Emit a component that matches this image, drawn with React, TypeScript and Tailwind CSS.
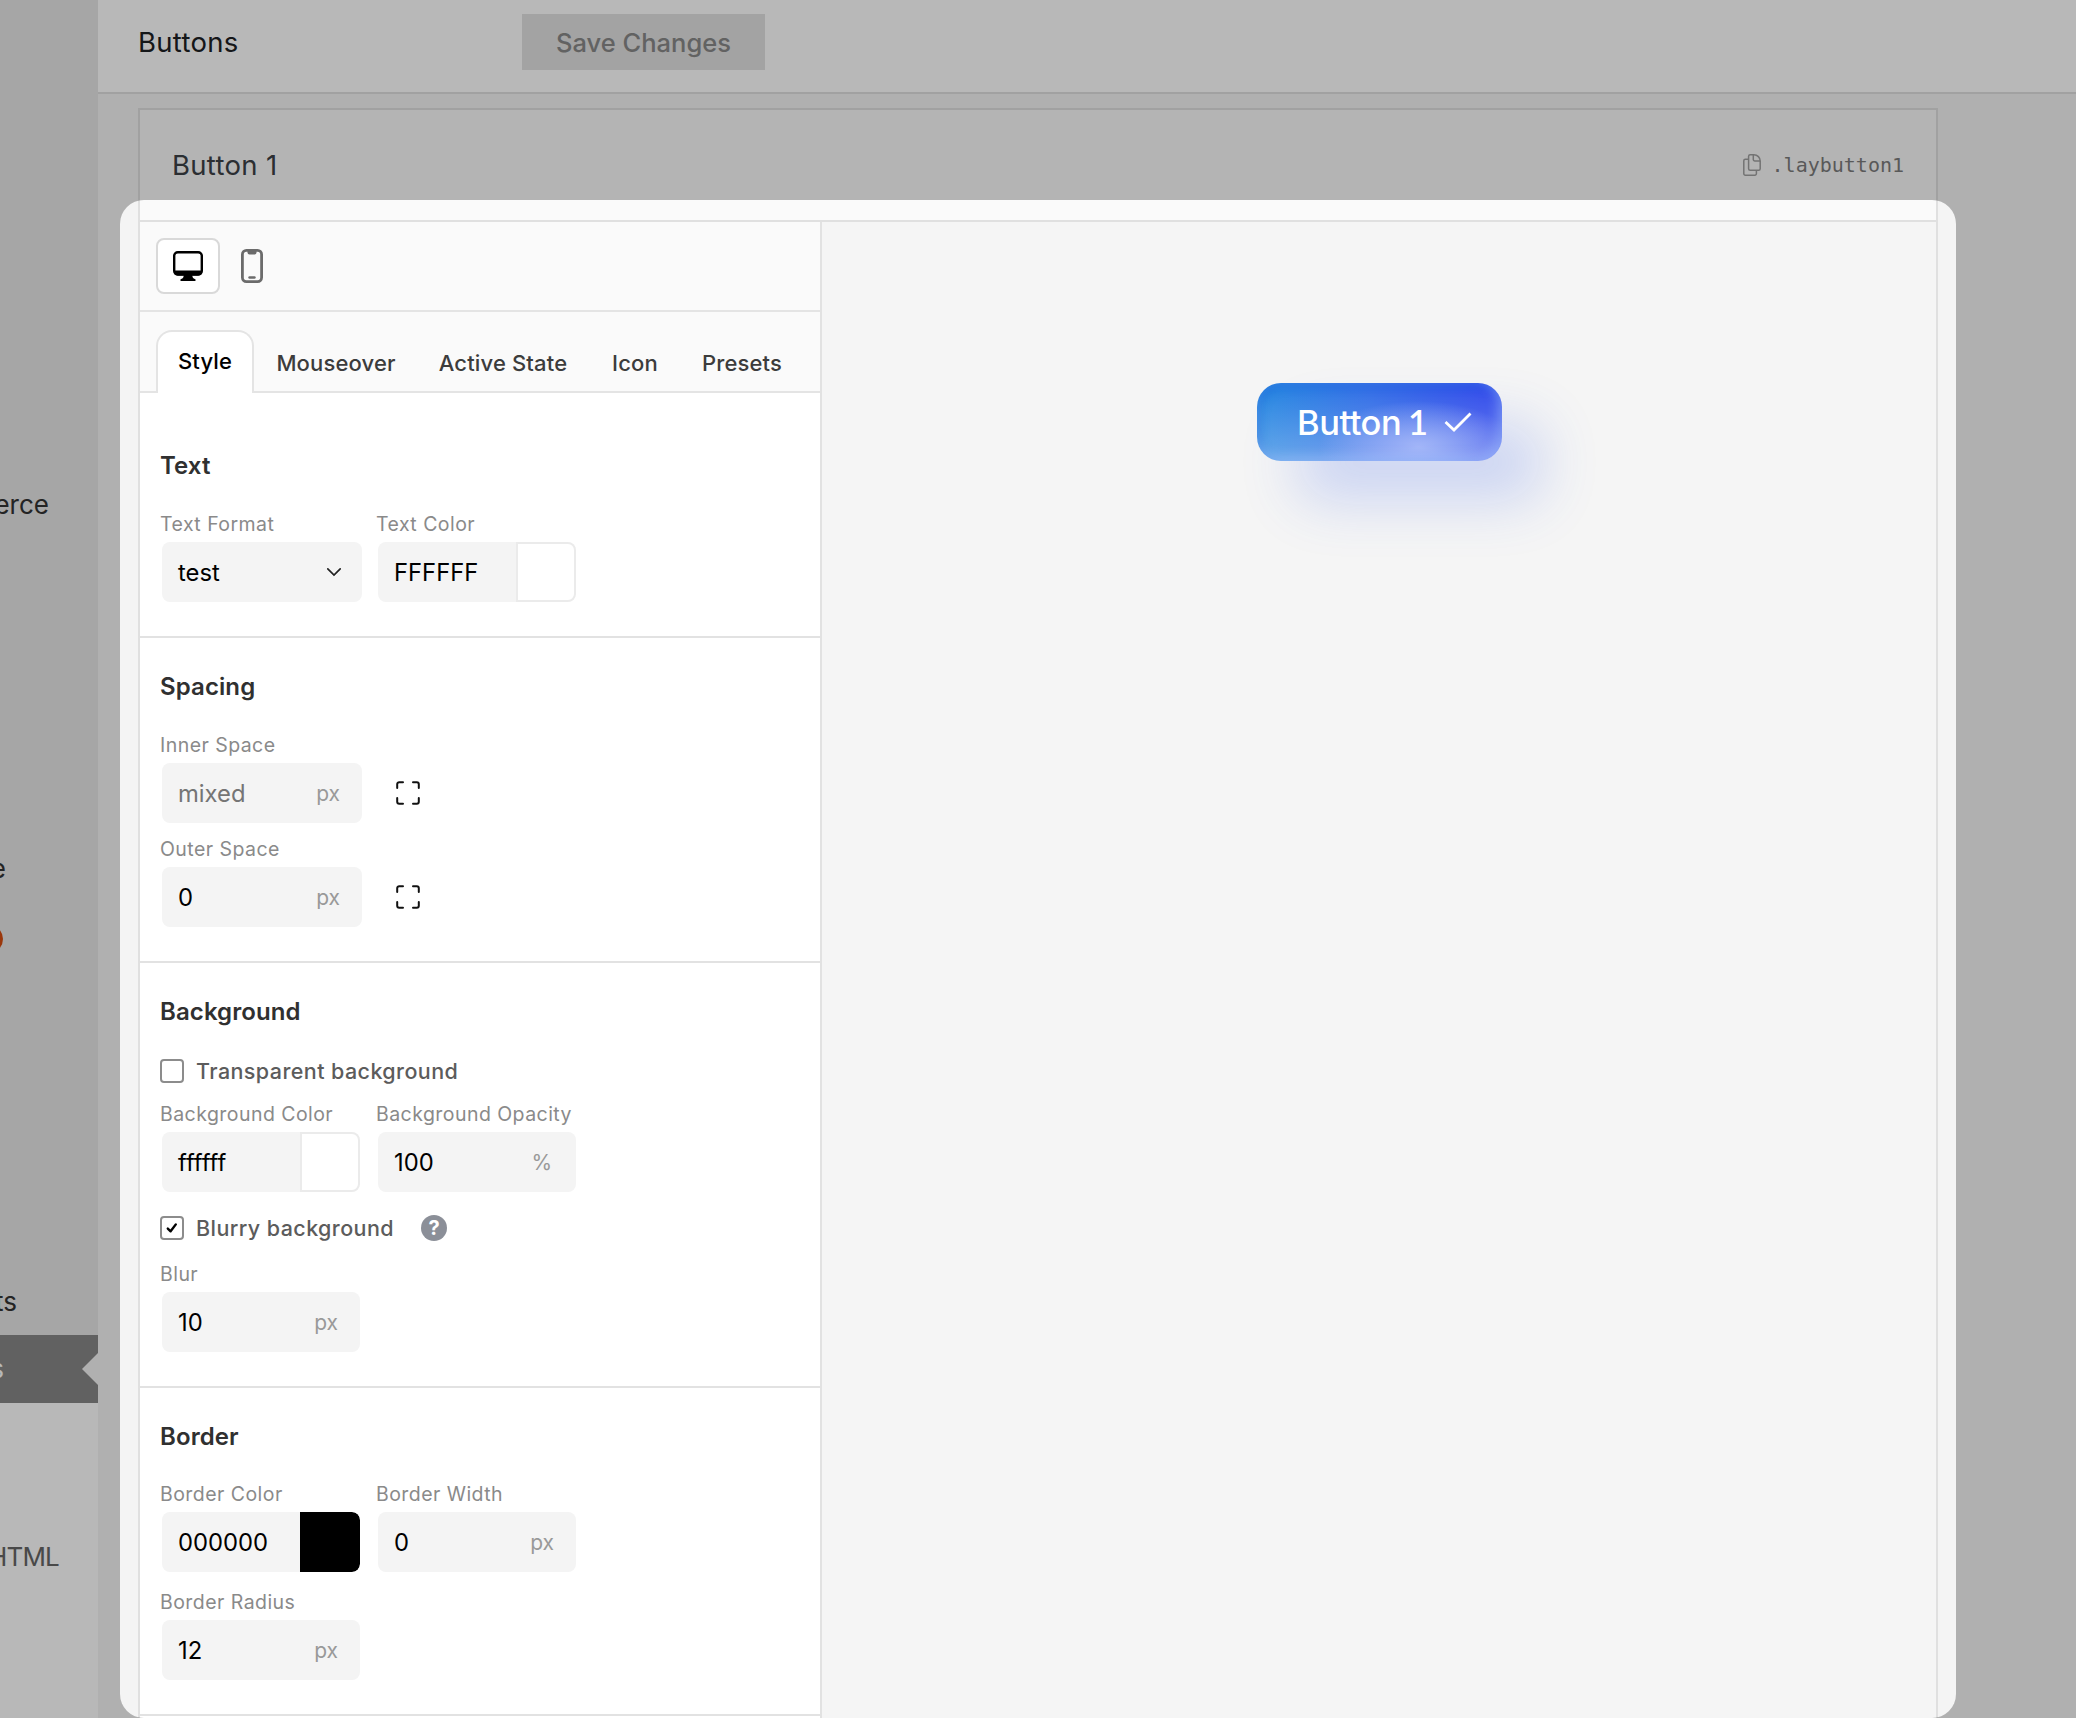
import React from "react";
import { clsx } from "clsx";

const ui = "font-['Inter','Liberation_Sans',sans-serif]";

const TABS = [
  { name: "Mouseover", size: "w-[118px]", gap: "ml-[23px]" },
  { name: "Active State", size: "w-[130px]", gap: "ml-[43px]" },
  { name: "Icon", size: "w-[46px]", gap: "ml-[44px]" },
  { name: "Presets", size: "w-[82px]", gap: "ml-[43px]" },
];

function DesktopIcon() {
  return (
    <svg width="30" height="30" viewBox="0 0 30 30" fill="none">
      <rect x="1.2" y="1.2" width="27.6" height="22.3" rx="3.6" stroke="#000" strokeWidth="2.4" />
      <path d="M1 19.5h28v1.5a3.6 3.6 0 0 1-3.6 3.6H4.6A3.6 3.6 0 0 1 1 21z" fill="#000" />
      <path d="M11 24h8l1 3 2.2 1.2a.95.95 0 0 1-.4 1.8H8.2a.95.95 0 0 1-.4-1.8l2.2-1.2z" fill="#000" />
    </svg>
  );
}

function PhoneIcon() {
  return (
    <svg width="22" height="34" viewBox="0 0 22 34" fill="none">
      <rect x="1.4" y="1.4" width="19.2" height="31.2" rx="4" stroke="#6b6b6b" strokeWidth="2.8" />
      <path d="M6.5 1.5h9v2a2 2 0 0 1-2 2h-5a2 2 0 0 1-2-2z" fill="#6b6b6b" />
      <path d="M8.5 28.5h5" stroke="#6b6b6b" strokeWidth="2.4" strokeLinecap="round" />
    </svg>
  );
}

function CopyIcon() {
  return (
    <svg width="18" height="22" viewBox="0 0 18 22" fill="none" stroke="#a0a0a0" strokeWidth="1.5" strokeLinejoin="round">
      <path d="M5.6 2.2A1.5 1.5 0 0 1 7.1.8h3.8c3.6 0 6.3 2.7 6.3 6.3v7.6a1.5 1.5 0 0 1-1.5 1.5H7.1a1.5 1.5 0 0 1-1.5-1.5z" />
      <path d="M10.3.9v4.6a1.5 1.5 0 0 0 1.5 1.5h5.3" />
      <path d="M5.6 5.3H2.3A1.5 1.5 0 0 0 .8 6.8v12.9a1.5 1.5 0 0 0 1.5 1.5h9.6a1.5 1.5 0 0 0 1.5-1.5v-3.5" />
    </svg>
  );
}

function ExpandIcon() {
  return (
    <svg width="24" height="24" viewBox="0 0 24 24" fill="none" stroke="#111" strokeWidth="2" strokeLinecap="round">
      <path d="M1.2 7V3.2a2 2 0 0 1 2-2H7" />
      <path d="M17 1.2h3.8a2 2 0 0 1 2 2V7" />
      <path d="M22.8 17v3.8a2 2 0 0 1-2 2H17" />
      <path d="M7 22.8H3.2a2 2 0 0 1-2-2V17" />
    </svg>
  );
}

function Field({
  label,
  value,
  unit,
  swatch,
  select,
  muted,
  wide,
}: {
  label: string;
  value: string;
  unit?: string;
  swatch?: "white" | "black";
  select?: boolean;
  muted?: boolean;
  wide?: boolean;
}) {
  return (
    <div className={clsx("shrink-0", wide ? "w-[202px]" : "w-[200px]")}>
      <div className="h-[26px] whitespace-nowrap text-[19.5px] leading-[26px] tracking-[0.45px] text-[#8a8a8a]">{label}</div>
      <div className="ml-0.5 mt-[5px] flex h-[60px] items-center overflow-hidden rounded-lg bg-[#f4f4f4] pl-4">
        <span className={clsx("flex-1 pt-0.5 text-[23.8px]", muted ? "text-[#757575]" : "text-black")}>{value}</span>
        {unit && (
          <span className={clsx("pt-0.5 text-[21px] text-[#999]", unit === "%" ? "mr-6" : "mr-[22px]")}>{unit}</span>
        )}
        {select && (
          <svg className="mr-5" width="16" height="10" viewBox="0 0 16 10" fill="none" stroke="#222" strokeWidth="1.7">
            <path d="M1.8 1.8 8 8l6.2-6.2" strokeLinecap="round" />
          </svg>
        )}
        {swatch && (
          <span
            className={clsx(
              "h-[60px] w-[60px] rounded-r-lg",
              swatch === "white" ? "border-2 border-[#ebebeb] bg-white" : "bg-black"
            )}
          />
        )}
      </div>
    </div>
  );
}

function Checkbox({ label, checked }: { label: string; checked?: boolean }) {
  return (
    <div className="flex h-6 items-center">
      <span className="flex size-6 items-center justify-center rounded-[4px] border-2 border-[#8c8c8c] bg-white">
        {checked && (
          <svg width="12" height="12" viewBox="0 0 12 12" fill="none" stroke="#000" strokeWidth="2.4">
            <path d="M1.8 6.6 4.6 9.3 9.8 2.4" strokeLinecap="round" strokeLinejoin="round" />
          </svg>
        )}
      </span>
      <span className="ml-3 whitespace-nowrap text-[21.5px] font-medium tracking-[0.42px] text-[#5c5c5c]">{label}</span>
    </div>
  );
}

function Section({ title, first, children }: { title: string; first?: boolean; children: React.ReactNode }) {
  return (
    <section className={clsx("border-b-2 border-[#e2e2e2] pb-[34px] pl-5", first ? "pt-[57px]" : "pt-[33px]")}>
      <h2 className="text-[24px] font-semibold leading-8 tracking-[0.1px] text-[#303030]">{title}</h2>
      {children}
    </section>
  );
}

function Sidebar() {
  return (
    <aside className="flex w-[98px] shrink-0 flex-col overflow-hidden bg-white text-[26px] leading-8 text-[#323232]">
      <div className="flex h-[1335px] flex-col bg-[#e6e6e6]">
        <div className="mt-[489px] flex w-[49px] justify-end whitespace-nowrap">Commerce</div>
        <div className="mt-[332px] flex w-[6px] justify-end">Profile</div>
        <div className="-ml-[25px] mt-10 size-7 rounded-full bg-[#d64d10]" />
        <div className="mt-[333px] flex w-[17px] justify-end">Formats</div>
      </div>
      <div className="flex h-[68px] items-center justify-between bg-[#878787] text-white">
        <span className="flex w-1 justify-end">Buttons</span>
        <svg width="16" height="32" viewBox="0 0 16 32">
          <path d="M16 0v32L0 16z" fill="#f4f4f4" />
        </svg>
      </div>
      <div className="mt-[138px] flex w-[59px] justify-end whitespace-nowrap tracking-[-0.8px] text-[#666]">Custom HTML</div>
    </aside>
  );
}

function Preview() {
  return (
    <div className="flex flex-1 justify-center bg-[#f5f5f5] pt-[161px]">
      <button className="ml-px flex h-[78px] w-[245px] items-center rounded-[24px] bg-[radial-gradient(ellipse_100px_46px_at_66%_82%,#a3b6f8_0%,#a3b6f800_100%),linear-gradient(180deg,#ffffff00_0%,#ffffff50_100%),linear-gradient(95deg,#2186e0_0%,#2f6ce6_45%,#2f4bea_90%)] pl-10 text-white shadow-[40px_40px_56px_rgba(50,95,235,0.21),inset_-4px_-4px_12px_rgba(175,205,255,0.45),inset_4px_4px_10px_rgba(20,90,215,0.35)]">
        <span className="w-[131px] whitespace-nowrap text-left text-[34.5px] font-medium tracking-[-0.5px]">
          Button <span className="-ml-0.5 font-['Lato',sans-serif] font-semibold">1</span>
        </span>
        <svg className="ml-4" width="28" height="20" viewBox="0 0 28 20" fill="none" stroke="#fff" strokeWidth="2.8">
          <path d="M1.5 10 10 18 26.5 1.5" />
        </svg>
      </button>
    </div>
  );
}

export default function App() {
  return (
    <div className={clsx(ui, "relative flex h-[1718px] w-[2076px] overflow-hidden bg-[#f4f4f4]")}>
      <Sidebar />
      <main className="flex min-w-0 flex-1 flex-col">
        <header className="flex h-[94px] shrink-0 items-start border-b-2 border-[#e0e0e0] bg-white pl-10">
          <h1 className="mt-[26px] w-[384px] text-[27.5px] leading-8 tracking-[0.3px] text-[#1d2023]">Buttons</h1>
          <button className="mt-3.5 h-14 w-[243px] bg-[#e2e2e2] pt-0.5 text-[25.5px] font-medium text-[#888]">Save Changes</button>
        </header>

        <div className="ml-10 mt-3.5 flex w-[1800px] flex-1 flex-col border-x-2 border-t-2 border-[#e0e0e0]">
          <div className="flex h-28 shrink-0 items-center justify-between border-b-2 border-[#e0e0e0] bg-[#fafafa] pl-8 pr-8">
            <span className="pt-0.5 text-[27.5px] tracking-[0.3px] text-[#3c4146]">Button 1</span>
            <span className="flex items-center gap-[11px]">
              <CopyIcon />
              <code className="font-['DejaVu_Sans_Mono',monospace] text-[20px] text-[#7c7c7c]">.laybutton1</code>
            </span>
          </div>

          <div className="flex flex-1">
            <div className="w-[682px] shrink-0 border-r-2 border-[#e2e2e2] bg-white">
              <div className="flex h-[90px] items-center border-b-2 border-[#e4e4e4] bg-[#fafafa] pl-4">
                <div className="flex h-14 w-16 items-center justify-center rounded-lg border-2 border-[#d9d9d9] bg-white">
                  <DesktopIcon />
                </div>
                <div className="ml-[21px]">
                  <PhoneIcon />
                </div>
              </div>

              <nav className="flex h-[81px] items-end border-b-2 border-[#e4e4e4] bg-[#fafafa] pl-4 text-[22px] font-medium tracking-[0.15px] text-[#3c3c3c]">
                <div className="-mb-0.5 flex h-[63px] w-[98px] items-center justify-center rounded-t-[16px] border-x-2 border-t-2 border-[#e4e4e4] bg-white pb-0.5 text-black">
                  Style
                </div>
                {TABS.map((tab) => (
                  <div key={tab.name} className={clsx("flex h-[55px] items-center justify-center whitespace-nowrap", tab.size, tab.gap)}>
                    {tab.name}
                  </div>
                ))}
              </nav>

              <Section title="Text" first>
                <div className="mt-[29px] flex gap-[14px]">
                  <Field label="Text Format" value="test" select wide />
                  <Field label="Text Color" value="FFFFFF" swatch="white" />
                </div>
              </Section>

              <Section title="Spacing">
                <div className="mt-[29px] flex items-end">
                  <Field label="Inner Space" value="mixed" unit="px" muted wide />
                  <div className="mb-[18px] ml-[34px]">
                    <ExpandIcon />
                  </div>
                </div>
                <div className="mt-[13px] flex items-end">
                  <Field label="Outer Space" value="0" unit="px" wide />
                  <div className="mb-[18px] ml-[34px]">
                    <ExpandIcon />
                  </div>
                </div>
              </Section>

              <Section title="Background">
                <div className="mt-[31px]">
                  <Checkbox label="Transparent background" />
                </div>
                <div className="mt-[18px] flex gap-4">
                  <Field label="Background Color" value="ffffff" swatch="white" />
                  <Field label="Background Opacity" value="100" unit="%" />
                </div>
                <div className="mt-[23px] flex items-center">
                  <Checkbox label="Blurry background" checked />
                  <span className="ml-[27px] flex size-[26px] items-center justify-center rounded-full bg-[#8b8f98] text-[20px] font-bold text-white">?</span>
                </div>
                <div className="mt-5">
                  <Field label="Blur" value="10" unit="px" />
                </div>
              </Section>

              <Section title="Border">
                <div className="mt-[28px] flex gap-4">
                  <Field label="Border Color" value="000000" swatch="black" />
                  <Field label="Border Width" value="0" unit="px" />
                </div>
                <div className="mt-[17px]">
                  <Field label="Border Radius" value="12" unit="px" />
                </div>
              </Section>
            </div>

            <Preview />
          </div>
        </div>
      </main>

      {/* Spotlight: dims everything outside the editor */}
      <div className="pointer-events-none absolute left-[120px] top-[200px] h-[1518px] w-[1836px] rounded-[24px] shadow-[0_0_0_2000px_rgba(0,0,0,0.28)]" />
    </div>
  );
}
